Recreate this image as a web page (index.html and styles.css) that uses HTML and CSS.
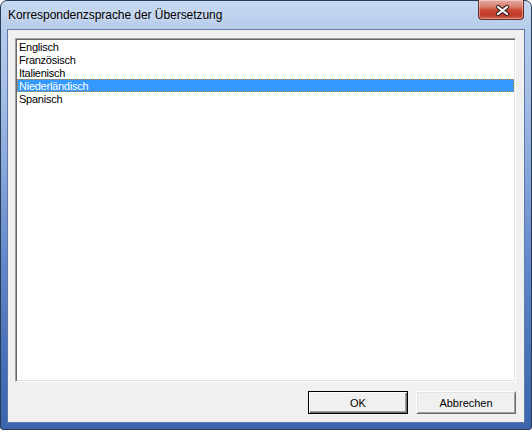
FILE: index.html
```html
<!DOCTYPE html>
<html lang="de">
<head>
<meta charset="utf-8">
<title>Korrespondenzsprache der Übersetzung</title>
<link rel="stylesheet" href="styles.css">
</head>
<body>
<div class="window">
  <div class="titlebar">
    <span class="title">Korrespondenzsprache der Übersetzung</span>
    <button class="close" aria-label="Schließen">
      <svg width="46" height="20" viewBox="0 0 46 20">
        <path d="M20 7 L29 14 M29 7 L20 14" stroke="#3a2424" stroke-width="4.2" stroke-linecap="round" fill="none"/>
        <path d="M20 7 L29 14 M29 7 L20 14" stroke="#ffffff" stroke-width="2.2" stroke-linecap="round" fill="none"/>
      </svg>
    </button>
  </div>
  <div class="client">
    <div class="listbox">
      <div class="item">Englisch</div>
      <div class="item">Französisch</div>
      <div class="item">Italienisch</div>
      <div class="item selected">Niederländisch</div>
      <div class="item">Spanisch</div>
    </div>
    <div class="buttons">
      <button class="btn default">OK</button>
      <button class="btn">Abbrechen</button>
    </div>
  </div>
</div>
</body>
</html>
```
FILE: styles.css
```css
* {
  box-sizing: border-box;
}

html, body {
  margin: 0;
  padding: 0;
  background: #ffffff;
}

.window {
  position: relative;
  width: 532px;
  height: 430px;
  border: 1px solid #2c3b55;
  border-radius: 7px 7px 3px 3px;
  padding: 0 6px 6px 6px;
  display: flex;
  flex-direction: column;
  background: linear-gradient(to bottom,
    #c6d8f0 0px,
    #b6cceb 28px,
    #a5bfe6 90px,
    #86a6da 170px,
    #6288cb 260px,
    #4a72b8 350px,
    #3c64ad 430px);
  font-family: "Liberation Sans", Arial, sans-serif;
}

.titlebar {
  height: 28px;
  display: flex;
  align-items: center;
  flex: none;
}

.title {
  padding-left: 1px;
  font-size: 12px;
  letter-spacing: -0.05px;
  color: #000000;
  text-shadow: 0 0 6px rgba(255, 255, 255, 0.7);
}

.close {
  position: absolute;
  top: -1px;
  right: 7px;
  width: 46px;
  height: 20px;
  padding: 0;
  margin: 0;
  border: 1px solid #6b2e2a;
  border-top: none;
  border-radius: 0 0 4px 4px;
  background: linear-gradient(to bottom,
    #e6aca2 0%,
    #d7806f 35%,
    #c8462f 55%,
    #c13c28 80%,
    #d0644f 100%);
  box-shadow: inset 0 0 0 1px rgba(255, 255, 255, 0.35);
  display: block;
}

.close svg {
  display: block;
  position: absolute;
  left: -1px;
  top: 0;
}

.client {
  flex: 1;
  display: flex;
  flex-direction: column;
  border: 1px solid #5f7aa8;
  background: #f0f0f0;
  padding: 8px 8px 8px 7px;
}

.listbox {
  height: 344px;
  flex: none;
  background: #ffffff;
  border-top: 1px solid #a0a0a0;
  border-left: 1px solid #a0a0a0;
  border-right: 1px solid #ffffff;
  border-bottom: 1px solid #ffffff;
  box-shadow: inset 1px 1px 0 #696969, inset -1px -1px 0 #e3e3e3;
  padding: 1px;
}

.item {
  height: 13px;
  line-height: 14px;
  padding-left: 2px;
  font-size: 11px;
  letter-spacing: -0.25px;
  color: #000000;
  white-space: nowrap;
}

.item.selected {
  background: #3399ff;
  color: #ffffff;
  outline: 1px dotted #c8843c;
  outline-offset: -1px;
}

.buttons {
  margin-top: 9px;
  display: flex;
  justify-content: flex-end;
  gap: 8px;
}

.btn {
  width: 100px;
  height: 23px;
  margin: 0;
  padding: 0;
  font-family: "Liberation Sans", Arial, sans-serif;
  font-size: 11px;
  color: #000000;
  background: #f0f0f0;
  border-top: 1px solid #ffffff;
  border-left: 1px solid #ffffff;
  border-right: 1px solid #696969;
  border-bottom: 1px solid #696969;
  box-shadow: inset 1px 1px 0 #e3e3e3, inset -1px -1px 0 #a0a0a0;
}

.btn.default {
  border: 1px solid #000000;
  box-shadow: inset 1px 1px 0 #ffffff, inset -1px -1px 0 #696969, inset -2px -2px 0 #a0a0a0;
}
```
